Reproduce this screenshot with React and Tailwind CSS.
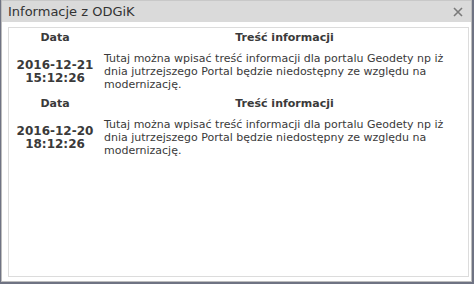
import React from 'react';

const news = [
  {
    date: '2016-12-21',
    time: '15:12:26',
    text: 'Tutaj można wpisać treść informacji dla portalu Geodety np iż dnia jutrzejszego Portal będzie niedostępny ze względu na modernizację.',
  },
  {
    date: '2016-12-20',
    time: '18:12:26',
    text: 'Tutaj można wpisać treść informacji dla portalu Geodety np iż dnia jutrzejszego Portal będzie niedostępny ze względu na modernizację.',
  },
];

const App = () => {
  return (
    <div className="w-[474px] h-[284px] bg-[#6f7383] font-['DejaVu_Sans',sans-serif] text-[#3a3a3a]">
      <div className="ml-px w-[471px] h-[282px] flex flex-col bg-white border border-t-0 border-[#bdbdbd]">
        {/* pasek tytułu */}
        <div className="h-[22px] flex items-center justify-between bg-[#dadada] border-t border-[#c8c8c8] pl-[6px] pr-[8px]">
          <span className="text-[13px] leading-none text-[#333]">Informacje z ODGiK</span>
          <svg width="10" height="10" viewBox="0 0 10 10" className="text-[#7a7a7a]">
            <path d="M1 1L9 9M9 1L1 9" stroke="currentColor" strokeWidth="1.6" />
          </svg>
        </div>

        <div className="flex-1 pt-[5px] pl-[6px] pr-[2px] pb-[4px]">
          <div className="h-full border border-[#dcdcdc]">
            <table className="w-full border-collapse text-[11px] leading-[13px]">
              <tbody>
                {news.map((item, index) => (
                  <React.Fragment key={index}>
                    <tr>
                      <th className="w-[92px] pt-[3px] pb-[5px] font-bold text-center">Data</th>
                      <th className="pt-[3px] pb-[5px] font-bold text-center">Treść informacji</th>
                    </tr>
                    <tr>
                      <td className="py-[3px] font-bold text-center align-middle text-[12px] leading-[13px]">
                        {item.date}
                        <br />
                        {item.time}
                      </td>
                      <td className="py-[3px] pl-[3px] pr-[6px] align-top">{item.text}</td>
                    </tr>
                  </React.Fragment>
                ))}
              </tbody>
            </table>
          </div>
        </div>
      </div>
    </div>
  );
};

export default App;
